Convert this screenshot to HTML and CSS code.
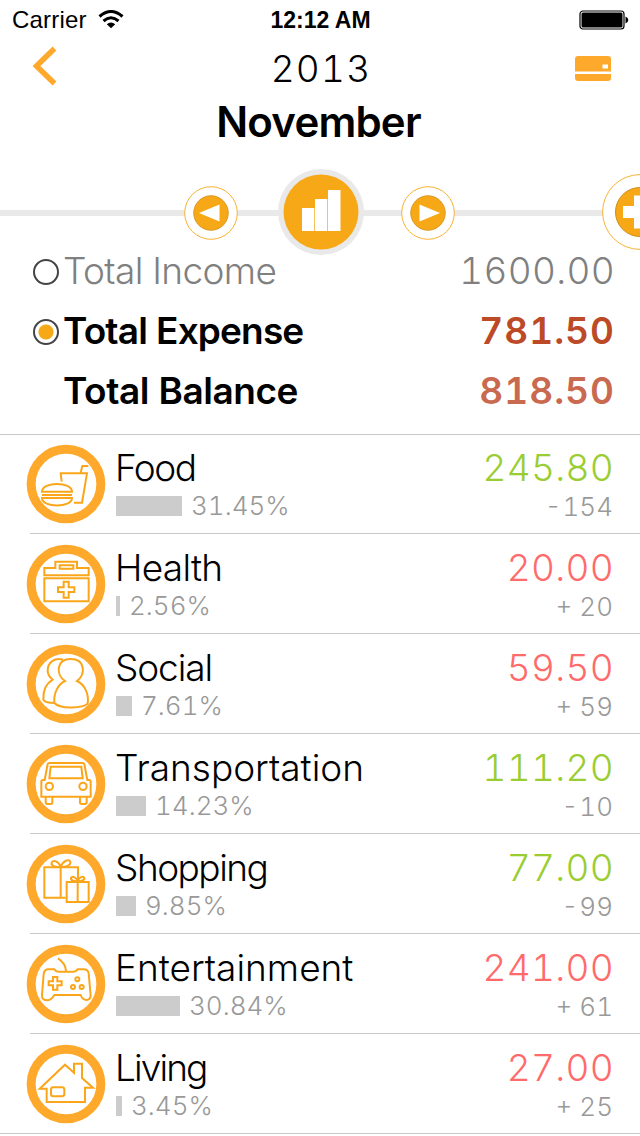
FILE: index.html
```
<!DOCTYPE html>
<html lang="en">
<head>
    <meta charset="UTF-8">
    <meta name="viewport" content="width=device-width, initial-scale=1.0">
    <title>November 2013</title>
    <link rel="stylesheet" href="styles.css">
</head>
<body>
    <div class="status-bar">
        <div class="carrier">
            <span>Carrier</span>
            <svg class="wifi" viewBox="0 0 26 20">
                <path d="M1.5 6.5 Q13 -3.5 24.500 6.500" fill="none" stroke="#000" stroke-width="3"/>
                <path d="M5.500 11 Q13 4.500 20.500 11" fill="none" stroke="#000" stroke-width="3"/>
                <path d="M8.800 14.300 Q13 10.800 17.200 14.300 L13 18.300 Z"/>
            </svg>
        </div>
        <span class="time">12:12 AM</span>
        <svg class="battery" viewBox="0 0 50 20">
            <rect x="1" y="1" width="44" height="18" rx="3" fill="none" stroke="#000" stroke-width="1.2"/>
            <rect x="2.500" y="2.500" width="41" height="15" rx="1.500"/>
            <path d="M46.500 6.500 Q49.300 7.500 49.300 10 Q49.300 12.500 46.500 13.500 Z"/>
        </svg>
    </div>

    <header class="header">
        <svg class="back" viewBox="0 0 26 40"><path d="M23.500 2.500 L5.500 20 L23.500 37.500" fill="none" stroke="#ffa92c" stroke-width="5.500"/></svg>
        <span class="year">2013</span>
        <svg class="card" viewBox="0 0 36 25">
            <path fill="#ffa92c" d="M3 0H33Q36 0 36 3V15.500H0V3Q0 0 3 0Z M0 18H36V22Q36 25 33 25H3Q0 25 0 22Z"/>
            <rect x="27.500" y="8.500" width="5.500" height="4" fill="#fff"/>
        </svg>
    </header>
    <h1 class="month">November</h1>

    <nav class="timeline">
        <svg class="step" viewBox="0 0 54 54">
            <circle cx="27" cy="27" r="26.300" fill="#fff" stroke="#f9b233"/>
            <circle cx="27" cy="27" r="17.300" fill="#f7a816" stroke="#cf8e1c" stroke-width=".8"/>
            <path fill="#fff" d="M15 27 L35.500 18.500 V35.500 Z"/>
        </svg>
        <svg class="chart" viewBox="0 0 86 86">
            <circle cx="43" cy="43" r="43" fill="#e9e9e9"/>
            <circle cx="43" cy="43" r="37.500" fill="#f7a816"/>
            <path fill="#fff" d="M24 39H36.300V62H24Z M37 30H49.300V62H37Z M50 21H62.500V62H50Z"/>
        </svg>
        <svg class="step" viewBox="0 0 54 54">
            <circle cx="27" cy="27" r="26.300" fill="#fff" stroke="#f9b233"/>
            <circle cx="27" cy="27" r="17.300" fill="#f7a816" stroke="#cf8e1c" stroke-width=".8"/>
            <path fill="#fff" d="M39 27 L18.500 18.500 V35.500 Z"/>
        </svg>
        <svg class="add" viewBox="0 0 76 76">
            <circle cx="38" cy="38" r="37.400" fill="#fff" stroke="#f9b233"/>
            <circle cx="38" cy="38" r="24.500" fill="#f7a816" stroke="#cf8e1c"/>
            <path fill="#fff" d="M21 32H32V21.500H44V32H55V44H44V54.500H32V44H21Z"/>
        </svg>
    </nav>

    <section class="summary">
        <div class="total income">
            <span class="radio"></span>
            <span class="label">Total Income</span>
            <span class="value">1600.00</span>
        </div>
        <div class="total expense">
            <span class="radio checked"></span>
            <span class="label">Total Expense</span>
            <span class="value">781.50</span>
        </div>
        <div class="total balance">
            <span class="radio hidden"></span>
            <span class="label">Total Balance</span>
            <span class="value">818.50</span>
        </div>
    </section>

    <ul class="categories">
        <li class="category food">
            <svg class="icon" viewBox="18 27 240 240">
                <circle class="ring" cx="138" cy="147" r="104.500"/>
                <path d="M125 140 L122 115 H201 L186 203 H162 M182 113 L187 93 H205"/>
                <path d="M66 170 C66 139 156 139 156 170 Z M66 180 H156 M66 189 H156 C156 219 66 219 66 189 Z"/>
            </svg>
            <div class="info">
                <div class="name">Food</div>
                <div class="share"><span class="bar" style="width: 66px"></span>31.45%</div>
            </div>
            <div class="amounts">
                <div class="amount under">245.80</div>
                <div class="diff minus">- 154</div>
            </div>
        </li>
        <li class="category health">
            <svg class="icon" viewBox="18 27 240 240">
                <circle class="ring" cx="138" cy="147" r="104.500"/>
                <path d="M73 121 V99 H106 V80 H171 V99 H206 V121 Z M119 91 H160 V101 H119 Z M73 130 H206 V199 H73 Z"/>
                <path d="M131 140 H146 V157 H163 V171 H146 V188 H131 V171 H114 V157 H131 Z"/>
            </svg>
            <div class="info">
                <div class="name">Health</div>
                <div class="share"><span class="bar" style="width: 4px"></span>2.56%</div>
            </div>
            <div class="amounts">
                <div class="amount over">20.00</div>
                <div class="diff">+ 20</div>
            </div>
        </li>
        <li class="category social">
            <svg class="icon" viewBox="18 27 240 240">
                <circle class="ring" cx="138" cy="147" r="104.500"/>
                <path d="M129 74 C104 66 83 83 83 107 C83 119 89 126 98 134 C79 145 69 168 70 194 Q74 204 105 204"/>
                <path d="M135 138 C106 118 109 72 152 72 C197 72 197 118 171 138 C195 149 207 177 203 206 C190 219 121 224 103 204 C100 174 115 147 135 138 Z"/>
            </svg>
            <div class="info">
                <div class="name">Social</div>
                <div class="share"><span class="bar" style="width: 16px"></span>7.61%</div>
            </div>
            <div class="amounts">
                <div class="amount over">59.50</div>
                <div class="diff">+ 59</div>
            </div>
        </li>
        <li class="category transportation">
            <svg class="icon" viewBox="18 27 240 240">
                <circle class="ring" cx="138" cy="147" r="104.500"/>
                <path d="M74 135 L83 87 Q84 84 88 84 H187 Q192 84 193 87 L202 135 H207 Q212 135 212 140 V185 H64 V140 Q64 135 69 135 Z"/>
                <path d="M92 95 H184 L188 130 H88 Z M77 186 V202 Q77 207 82 207 H92 Q97 207 97 202 V186 M180 186 V202 Q180 207 185 207 H195 Q200 207 200 202 V186"/>
                <circle cx="88" cy="154" r="11"/>
                <circle cx="189" cy="154" r="11"/>
            </svg>
            <div class="info">
                <div class="name">Transportation</div>
                <div class="share"><span class="bar" style="width: 30px"></span>14.23%</div>
            </div>
            <div class="amounts">
                <div class="amount under">111.20</div>
                <div class="diff minus">- 10</div>
            </div>
        </li>
        <li class="category shopping">
            <svg class="icon" viewBox="18 27 240 240">
                <circle class="ring" cx="138" cy="147" r="104.500"/>
                <path d="M137 188 H73 V97 H174 V138 M122 97 V188"/>
                <path d="M122 96 C116 78 99 73 95 83 C92 93 107 96 122 96 C137 97 153 91 151 81 C148 70 128 77 122 96"/>
                <path d="M140 141 H206 V201 H140 Z M173 141 V201"/>
                <path d="M173 139 C168 126 156 122 153 129 C151 137 164 139 173 139 C183 139 195 136 193 129 C190 122 177 126 173 139"/>
            </svg>
            <div class="info">
                <div class="name">Shopping</div>
                <div class="share"><span class="bar" style="width: 20px"></span>9.85%</div>
            </div>
            <div class="amounts">
                <div class="amount under">77.00</div>
                <div class="diff minus">- 99</div>
            </div>
        </li>
        <li class="category entertainment">
            <svg class="icon" viewBox="18 27 240 240">
                <circle class="ring" cx="138" cy="147" r="104.500"/>
                <path d="M114 70 C129 80 137 91 138 108"/>
                <path d="M85 103 H103 Q107 110 114 110 H160 Q168 110 173 103 H190 Q204 103 206 115 L212 181 Q212 195 199 195 Q188 195 182 180 H103 Q94 195 83 196 Q65 196 66 180 L71 117 Q73 103 85 103 Z"/>
                <path d="M99 126 H112 V139 H125 V151 H112 V164 H99 V151 H86 V139 H99 Z"/>
                <circle cx="172" cy="133" r="6"/>
                <circle cx="159" cy="156" r="6"/>
                <circle cx="185" cy="156" r="6"/>
            </svg>
            <div class="info">
                <div class="name">Entertainment</div>
                <div class="share"><span class="bar" style="width: 64px"></span>30.84%</div>
            </div>
            <div class="amounts">
                <div class="amount over">241.00</div>
                <div class="diff">+ 61</div>
            </div>
        </li>
        <li class="category living">
            <svg class="icon" viewBox="18 27 240 240">
                <circle class="ring" cx="138" cy="147" r="104.500"/>
                <path d="M80 161 H59 L135 89 L162 113 V86 H186 V129 L219 158 H195 V201 H80 Z"/>
                <rect x="93" y="157" width="40" height="27" rx="7"/>
            </svg>
            <div class="info">
                <div class="name">Living</div>
                <div class="share"><span class="bar" style="width: 6px"></span>3.45%</div>
            </div>
            <div class="amounts">
                <div class="amount over">27.00</div>
                <div class="diff">+ 25</div>
            </div>
        </li>
    </ul>
</body>
</html>
```
FILE: styles.css
```
* {
    box-sizing: border-box;
}
body {
    margin: 0;
    width: 640px;
    height: 1136px;
    overflow: hidden;
    background-color: #fff;
    color: #000;
    font-family: Inter, "Liberation Sans", sans-serif;
    font-weight: 300;
    font-variant-numeric: tabular-nums;
}
svg {
    display: block;
    flex: none;
}
.status-bar {
    display: grid;
    grid-template-columns: 1fr auto 1fr;
    align-items: center;
    height: 40px;
    padding: 0 11px 0 12px;
    font-family: "Liberation Sans", sans-serif;
    font-size: 24px;
}
.carrier {
    display: flex;
    align-items: center;
    gap: 11px;
    font-weight: 400;
    letter-spacing: 0.2px;
}
.wifi {
    width: 26px;
    height: 20px;
}
.time {
    padding-top: 1px;
    font-size: 23px;
    font-weight: 700;
}
.battery {
    width: 50px;
    height: 20px;
    justify-self: end;
}
.header {
    display: grid;
    grid-template-columns: 1fr auto 1fr;
    align-items: center;
    height: 56px;
    padding: 0 29px 0 31px;
}
.back {
    width: 26px;
    height: 40px;
    margin-top: -4px;
}
.card {
    width: 36px;
    height: 25px;
    justify-self: end;
}
.year {
    font-size: 37px;
    letter-spacing: 1.2px;
}
.month {
    margin: 0;
    height: 50px;
    line-height: 52px;
    padding-right: 3px;
    text-align: center;
    font-size: 42px;
    font-weight: 600;
    letter-spacing: -0.8px;
}
.timeline {
    display: flex;
    align-items: center;
    height: 86px;
    margin: 23px 0 -15px;
    padding-left: 184px;
    overflow: hidden;
    background: linear-gradient(#e9e9e9, #e9e9e9) 0 41px / 100% 6px no-repeat;
}
.step {
    width: 54px;
    height: 54px;
    margin-top: 2px;
}
.chart {
    width: 86px;
    height: 86px;
    margin: 0 37px 0 40px;
}
.add {
    width: 76px;
    height: 76px;
    margin-left: 147px;
}
.summary {
    height: 195px;
    border-bottom: 1px solid #c8c7cc;
}
.total {
    display: flex;
    align-items: center;
    height: 60px;
    padding: 1px 26px 0 33px;
    font-size: 37px;
}
.label {
    flex: 1;
    margin-left: 4px;
}
.radio {
    width: 26px;
    height: 26px;
    margin-top: 2px;
    border: 2px solid #444;
    border-radius: 50%;
}
.radio.checked {
    background: radial-gradient(circle, #f7a816 7px, #fff 8px);
}
.radio.hidden {
    visibility: hidden;
}
.income {
    color: #808080;
}
.income .label {
    letter-spacing: -0.6px;
}
.expense, .balance {
    font-weight: 600;
}
.expense .label {
    letter-spacing: -0.85px;
}
.balance .label {
    letter-spacing: -0.45px;
}
.expense .value {
    color: #bc4a26;
}
.balance .value {
    color: #c96a50;
}
.value {
    letter-spacing: 1px;
    margin-right: -1px;
}
.amount, .income .value {
    letter-spacing: 0.3px;
    margin-right: -1px;
}
.categories {
    list-style: none;
    margin: -1px 0 0;
    padding: 0;
}
.category {
    display: flex;
    height: 100px;
    padding: 10px 27px 0 26px;
    background: linear-gradient(#c8c7cc, #c8c7cc) 30px 99px / 100% 1px no-repeat;
}
.category:last-child {
    background-position: 0 99px;
}
.icon {
    width: 80px;
    height: 80px;
    fill: none;
    stroke: #fba61a;
    stroke-width: 6;
}
.ring {
    stroke: #ffa92c;
    stroke-width: 27;
}
.info {
    flex: 1;
    margin-left: 9px;
}
.name, .amount {
    height: 45px;
    line-height: 47px;
    font-size: 37px;
}
.food .name {
    letter-spacing: -1.5px;
}
.health .name {
    letter-spacing: -0.7px;
}
.social .name {
    letter-spacing: -1.1px;
}
.shopping .name {
    letter-spacing: -1.5px;
}
.living .name {
    letter-spacing: -1.9px;
}
.share, .diff {
    height: 34px;
    line-height: 36px;
    font-size: 26px;
    color: #999;
}
.share {
    display: flex;
    align-items: center;
}
.minus {
    word-spacing: -6px;
}
.bar {
    height: 20px;
    margin: 0 9px 0 1px;
    background-color: #ccc;
}
.amounts {
    text-align: right;
}
.under {
    color: #9acd32;
}
.over {
    color: #ff6b6b;
}
```
